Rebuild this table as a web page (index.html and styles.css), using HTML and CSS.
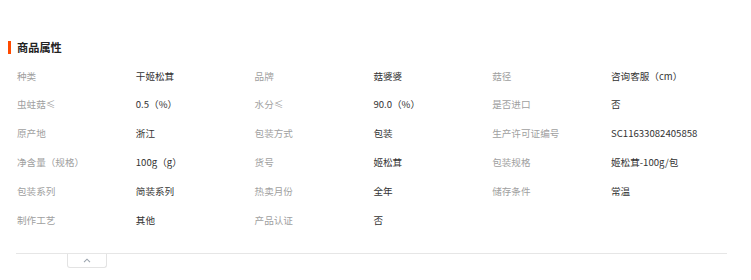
FILE: index.html
```html
<!DOCTYPE html>
<html lang="zh-CN">
<head>
<meta charset="utf-8">
<link rel="stylesheet" href="styles.css">
</head>
<body>
<div class="panel">
  <div class="title"><span class="bar"></span><span class="title-text">商品属性</span></div>
  <div class="attrs">
    <div class="k">种类</div><div class="v">干姬松茸</div>
    <div class="k">品牌</div><div class="v">菇婆婆</div>
    <div class="k">菇径</div><div class="v">咨询客服（cm）</div>

    <div class="k">虫蛀菇≤</div><div class="v">0.5（%）</div>
    <div class="k">水分≤</div><div class="v">90.0（%）</div>
    <div class="k">是否进口</div><div class="v">否</div>

    <div class="k">原产地</div><div class="v">浙江</div>
    <div class="k">包装方式</div><div class="v">包装</div>
    <div class="k">生产许可证编号</div><div class="v">SC11633082405858</div>

    <div class="k">净含量（规格）</div><div class="v">100g（g）</div>
    <div class="k">货号</div><div class="v">姬松茸</div>
    <div class="k">包装规格</div><div class="v">姬松茸-100g/包</div>

    <div class="k">包装系列</div><div class="v">简装系列</div>
    <div class="k">热卖月份</div><div class="v">全年</div>
    <div class="k">储存条件</div><div class="v">常温</div>

    <div class="k">制作工艺</div><div class="v">其他</div>
    <div class="k">产品认证</div><div class="v">否</div>
  </div>
  <div class="foot">
    <button class="toggle" type="button" aria-label="收起">
      <svg width="8" height="5" viewBox="0 0 8 5"><path d="M1 4.2 L4 1.2 L7 4.2" fill="none" stroke="#9aa3ad" stroke-width="1.1"/></svg>
    </button>
  </div>
</div>
</body>
</html>
```
FILE: styles.css
```css
html, body {
  margin: 0;
  padding: 0;
  background: #fff;
}
body {
  font-family: "Noto Sans CJK SC", "Noto Sans", sans-serif;
  color: #333;
}
.panel {
  padding: 40px 0 0 8px;
  width: 720px;
}
.title {
  display: flex;
  align-items: center;
  height: 14px;
}
.bar {
  width: 3px;
  height: 13px;
  background: #ff4a00;
}
.title-text {
  margin-left: 6px;
  font-size: 11.2px;
  font-weight: bold;
  line-height: 14px;
  color: #222;
}
.attrs {
  margin: 7.6px 0 0 9px;
  display: grid;
  grid-template-columns: repeat(6, 118.8px);
  grid-auto-rows: 28.8px;
  font-size: 9.6px;
  line-height: 28.8px;
}
.k {
  color: #a0a0a0;
  white-space: nowrap;
}
.v {
  color: #333;
  white-space: nowrap;
}
.foot {
  margin: 18.5px 0 0 8px;
  width: 711px;
  border-top: 1px solid #e6e6e6;
}
.toggle {
  display: flex;
  align-items: center;
  justify-content: center;
  margin-left: 51px;
  width: 40px;
  height: 14px;
  padding: 0;
  background: #fff;
  border: 1px solid #e3e3e3;
  border-top: none;
  border-radius: 0 0 3px 3px;
}
```
